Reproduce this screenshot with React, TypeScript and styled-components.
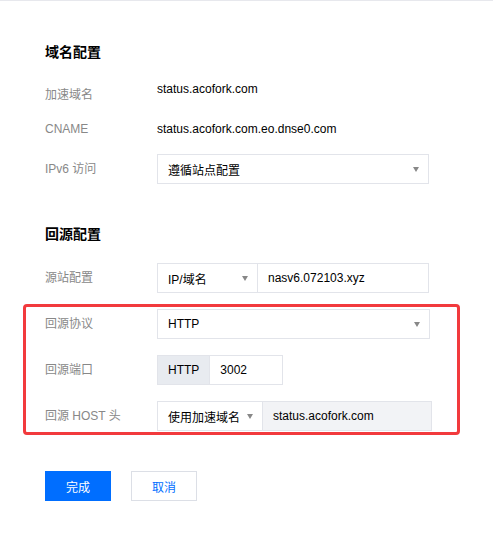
import React from "react";
import styled, { createGlobalStyle } from "styled-components";

const GlobalStyle = createGlobalStyle`
  html, body {
    margin: 0;
    padding: 0;
    background: #fff;
  }
  body {
    font-family: "Liberation Sans", Arial, "Noto Sans CJK SC", sans-serif;
    font-size: 12px;
    color: #000;
  }
`;

const Page = styled.div`
  border-top: 1px solid #e7e8ed;
  padding: 41px 0 40px 45px;
`;

const Section = styled.section<{ $top?: number }>`
  margin-top: ${(p) => p.$top ?? 0}px;
`;

const Heading = styled.h3<{ $bottom: number }>`
  margin: 0 0 ${(p) => p.$bottom}px;
  font-size: 14px;
  line-height: 20px;
  font-weight: 700;
  color: #000;
`;

const Rows = styled.div<{ $gap: number }>`
  display: flex;
  flex-direction: column;
  gap: ${(p) => p.$gap}px;
`;

const Row = styled.div`
  display: flex;
  align-items: center;
  height: 30px;
`;

const Label = styled.div<{ $drop?: number }>`
  width: 112px;
  flex-shrink: 0;
  color: #888;
  line-height: 18px;
  align-self: ${(p) => (p.$drop ? "flex-start" : "center")};
  padding-top: ${(p) => p.$drop ?? 0}px;
`;

const Value = styled.div`
  line-height: 30px;
  color: #000;
`;

const Group = styled.div`
  display: flex;
  & > * + * {
    margin-left: -1px;
  }
`;

const Select = styled.div<{ $width: number }>`
  box-sizing: border-box;
  width: ${(p) => p.$width}px;
  height: 30px;
  padding: 0 9px 0 10px;
  border: 1px solid #e2e4ea;
  background: #fff;
  display: flex;
  align-items: center;
  justify-content: space-between;
  gap: 6px;
`;

const Caret = styled.span`
  width: 0;
  height: 0;
  border-left: 3.5px solid transparent;
  border-right: 3.5px solid transparent;
  border-top: 5px solid #888;
  flex-shrink: 0;
`;

const Input = styled.div<{ $width: number; $disabled?: boolean }>`
  box-sizing: border-box;
  width: ${(p) => p.$width}px;
  height: 30px;
  padding: 0 10px;
  border: 1px solid #e2e4ea;
  background: ${(p) => (p.$disabled ? "#f2f3f6" : "#fff")};
  display: flex;
  align-items: center;
`;

const Addon = styled.div`
  box-sizing: border-box;
  height: 30px;
  padding: 0 10px;
  border: 1px solid #e2e4ea;
  background: #e8ebf0;
  display: flex;
  align-items: center;
`;

const Highlight = styled.div`
  box-sizing: border-box;
  width: 437px;
  margin: 11px 0 0 -22px;
  padding: 2px 0 1px 19px;
  border: 3px solid #f23a3d;
  border-radius: 4px;
`;

const Actions = styled.div`
  display: flex;
  gap: 20px;
  margin-top: 36px;
`;

const Button = styled.button<{ $primary?: boolean }>`
  box-sizing: border-box;
  width: 66px;
  height: 30px;
  font-family: inherit;
  font-size: 12px;
  cursor: pointer;
  border: 1px solid ${(p) => (p.$primary ? "#006eff" : "#dcdfe6")};
  background: ${(p) => (p.$primary ? "#006eff" : "#fff")};
  color: ${(p) => (p.$primary ? "#fff" : "#006eff")};
`;

export default function App() {
  return (
    <>
      <GlobalStyle />
      <Page>
        <Section>
          <Heading $bottom={12}>域名配置</Heading>
          <Rows $gap={10}>
            <Row>
              <Label $drop={12}>加速域名</Label>
              <Value>status.acofork.com</Value>
            </Row>
            <Row>
              <Label>CNAME</Label>
              <Value>status.acofork.com.eo.dnse0.com</Value>
            </Row>
            <Row>
              <Label>IPv6 访问</Label>
              <Select $width={272}>
                遵循站点配置
                <Caret />
              </Select>
            </Row>
          </Rows>
        </Section>

        <Section $top={40}>
          <Heading $bottom={19}>回源配置</Heading>
          <Row>
            <Label>源站配置</Label>
            <Group>
              <Select $width={101}>
                IP/域名
                <Caret />
              </Select>
              <Input $width={172}>nasv6.072103.xyz</Input>
            </Group>
          </Row>

          <Highlight>
            <Rows $gap={16}>
              <Row>
                <Label>回源协议</Label>
                <Select $width={273}>
                  HTTP
                  <Caret />
                </Select>
              </Row>
              <Row>
                <Label>回源端口</Label>
                <Group>
                  <Addon>HTTP</Addon>
                  <Input $width={74}>3002</Input>
                </Group>
              </Row>
              <Row>
                <Label>回源 HOST 头</Label>
                <Group>
                  <Select $width={106}>
                    使用加速域名
                    <Caret />
                  </Select>
                  <Input $width={170} $disabled>
                    status.acofork.com
                  </Input>
                </Group>
              </Row>
            </Rows>
          </Highlight>
        </Section>

        <Actions>
          <Button $primary>完成</Button>
          <Button>取消</Button>
        </Actions>
      </Page>
    </>
  );
}
